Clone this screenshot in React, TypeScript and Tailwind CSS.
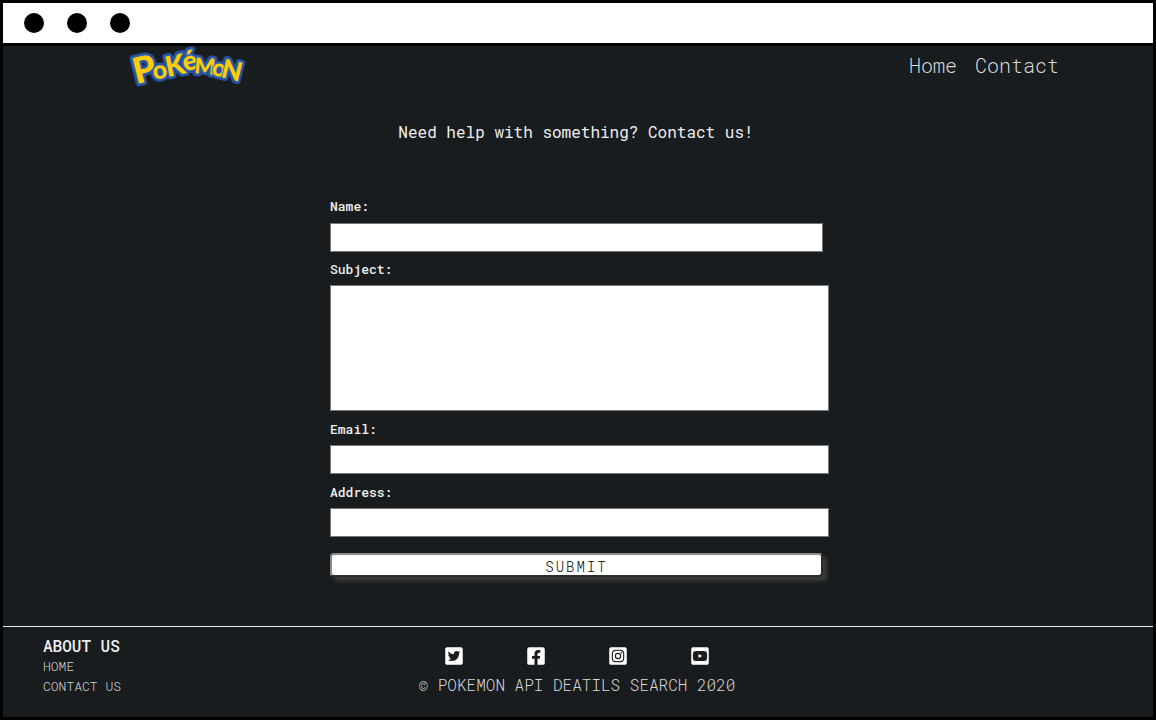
import {
  FaTwitterSquare,
  FaFacebookSquare,
  FaInstagramSquare,
  FaYoutubeSquare,
} from "react-icons/fa";

const socials = [
  { label: "Twitter", Icon: FaTwitterSquare },
  { label: "Facebook", Icon: FaFacebookSquare },
  { label: "Instagram", Icon: FaInstagramSquare },
  { label: "YouTube", Icon: FaYoutubeSquare },
];

const logoLetters = [
  { char: "P", x: 14, y: 23, angle: -14, size: 36, rise: 0.36 },
  { char: "o", x: 30, y: 26, angle: -10, size: 25, rise: 0.26 },
  { char: "K", x: 45, y: 19, angle: -12, size: 28, rise: 0.36 },
  { char: "é", x: 60, y: 17, angle: -14, size: 27, rise: 0.26 },
  { char: "M", x: 75, y: 20, angle: 4, size: 22, rise: 0.36 },
  { char: "o", x: 89, y: 24, angle: 10, size: 24, rise: 0.26 },
  { char: "N", x: 102, y: 24, angle: 14, size: 26, rise: 0.36 },
];

function Logo() {
  return (
    <svg
      viewBox="0 0 114 40"
      className="block h-10 w-[114px] overflow-visible"
      role="img"
      aria-label="Pokémon"
      fontFamily="Lato, sans-serif"
      fontWeight="900"
      textAnchor="middle"
      strokeLinejoin="round"
    >
      <g fill="#27509c" stroke="#27509c" strokeWidth="6">
        {logoLetters.map((l, i) => (
          <text
            key={i}
            x={l.x}
            y={l.y + l.size * l.rise}
            fontSize={l.size}
            transform={`rotate(${l.angle} ${l.x} ${l.y})`}
          >
            {l.char}
          </text>
        ))}
      </g>
      <g fill="#ffcb05" stroke="#2f66b0" strokeWidth="2" paintOrder="stroke">
        {logoLetters.map((l, i) => (
          <text
            key={i}
            x={l.x}
            y={l.y + l.size * l.rise}
            fontSize={l.size}
            transform={`rotate(${l.angle} ${l.x} ${l.y})`}
          >
            {l.char}
          </text>
        ))}
      </g>
    </svg>
  );
}

const field = "block w-full border border-[#767676] bg-white px-2 text-[13px] text-black";

export default function App() {
  return (
    <div className="flex min-h-screen flex-col border-3 border-black bg-[#181c1e] font-['Roboto_Mono','Liberation_Mono',monospace] text-[#eeeeee]">
      <div className="flex h-[43px] shrink-0 items-center gap-[23px] border-b-3 border-black bg-white px-[21px]">
        <span className="size-5 rounded-full bg-black" />
        <span className="size-5 rounded-full bg-black" />
        <span className="size-5 rounded-full bg-black" />
      </div>

      <header className="flex h-10 items-center justify-between pr-[94px] pl-[127px]">
        <a href="#home">
          <Logo />
        </a>
        <nav className="flex gap-[18px] pb-0.5 text-xl leading-6 font-light text-[#d8d8d8]">
          <a href="#home">Home</a>
          <a href="#contact">Contact</a>
        </nav>
      </header>

      <main className="flex grow flex-col px-4 pt-9">
        <h1 className="pr-1 text-center text-base leading-5">
          Need help with something? Contact us!
        </h1>
        <div className="pl-[3px]">
          <form className="mx-auto mt-[54px] w-full max-w-[499px] text-[13px]">
            <label htmlFor="name" className="block pb-[7px] leading-5 font-medium">Name:</label>
            <input id="name" type="text" className={`${field} h-[29px] max-w-[493px]`} />
            <label htmlFor="subject" className="block pt-[7px] pb-1.5 leading-5 font-medium">Subject:</label>
            <textarea id="subject" className={`${field} h-[126px] resize-none`} />
            <label htmlFor="email" className="block pt-2 pb-1.5 leading-5 font-medium">Email:</label>
            <input id="email" type="email" className={`${field} h-[29px]`} />
            <label htmlFor="address" className="block pt-2 pb-1.5 leading-5 font-medium">Address:</label>
            <input id="address" type="text" className={`${field} h-[29px]`} />
            <button
              type="submit"
              className="mt-4 block h-6 w-full max-w-[493px] rounded-[4px] border-2 border-t-[#8a8a8a] border-r-[#2c2c2c] border-b-[#2c2c2c] border-l-[#8a8a8a] bg-white pt-0.5 text-sm leading-5 font-light tracking-[2px] text-black shadow-[4px_4px_4px_#3c3c3c]"
            >
              SUBMIT
            </button>
          </form>
        </div>
      </main>

      <footer className="grid h-[91px] shrink-0 grid-cols-[1fr_auto_1fr] border-t border-[#eeeeee] pr-[42px] pl-10">
        <div className="pt-[9px] text-[13px] leading-5 font-light text-[#d8d8d8]">
          <h2 className="text-base leading-5 font-medium text-[#eeeeee]">ABOUT US</h2>
          <a href="#home" className="block">HOME</a>
          <a href="#contact" className="block">CONTACT US</a>
        </div>
        <div className="pt-[19px]">
          <div className="flex justify-center gap-[62px]">
            {socials.map(({ label, Icon }) => (
              <a key={label} href={`#${label.toLowerCase()}`} aria-label={label} className="text-xl text-white">
                <Icon />
              </a>
            ))}
          </div>
          <p className="mt-[7px] text-center text-base leading-6 font-light text-[#d8d8d8]">
            © POKEMON API DEATILS SEARCH 2020
          </p>
        </div>
      </footer>
    </div>
  );
}
